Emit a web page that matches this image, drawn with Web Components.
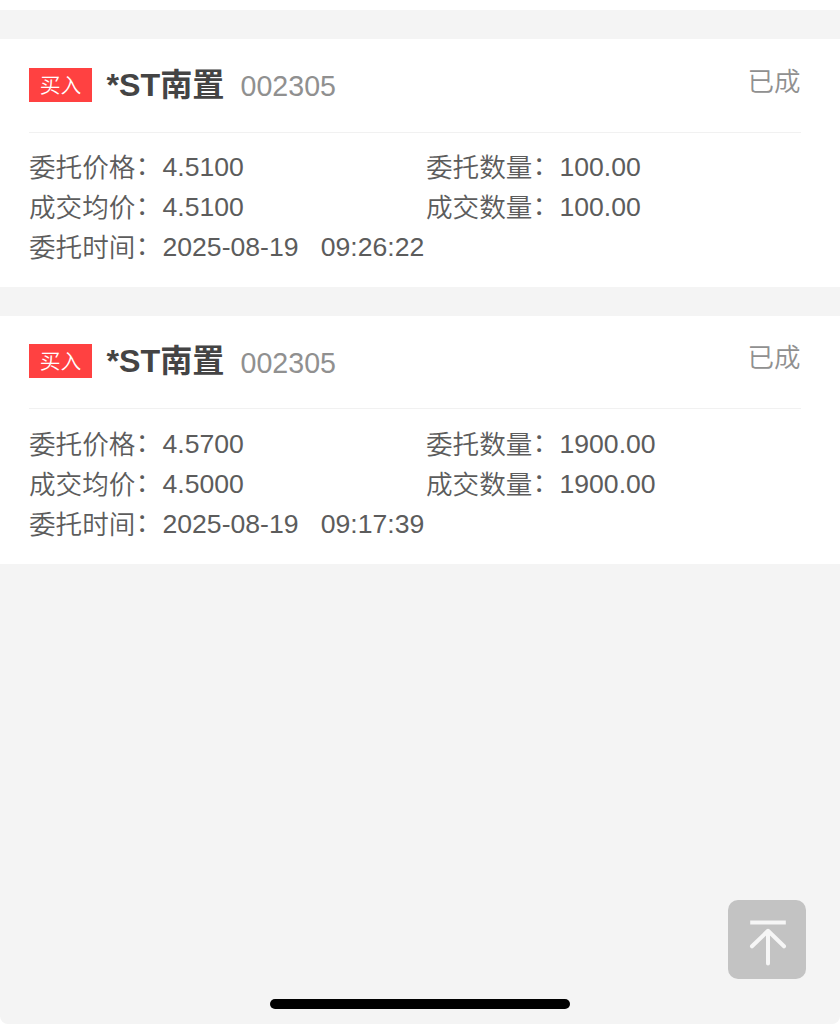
<!DOCTYPE html>
<html lang="zh-CN">
<head>
<meta charset="utf-8">
<title>委托记录</title>
<style>
  html, body {
    margin: 0;
    height: 100%;
    background: #fff;
  }
</style>
</head>
<body>
<order-page>
  <order-card side="买入" name="*ST南置" code="002305" status="已成">
    <order-field label="委托价格：">4.5100</order-field>
    <order-field label="委托数量：">100.00</order-field>
    <order-field label="成交均价：">4.5100</order-field>
    <order-field label="成交数量：">100.00</order-field>
    <order-field label="委托时间：" wide>2025-08-19   09:26:22</order-field>
  </order-card>
  <order-card side="买入" name="*ST南置" code="002305" status="已成">
    <order-field label="委托价格：">4.5700</order-field>
    <order-field label="委托数量：">1900.00</order-field>
    <order-field label="成交均价：">4.5000</order-field>
    <order-field label="成交数量：">1900.00</order-field>
    <order-field label="委托时间：" wide>2025-08-19   09:17:39</order-field>
  </order-card>
  <back-to-top slot="overlay"></back-to-top>
  <home-indicator slot="overlay"></home-indicator>
</order-page>
<script>
function attach(host, html) {
  const element = document.createElement("template");
  element.innerHTML = html;
  const shadow = host.attachShadow({ mode: "open" });
  shadow.append(element.content.cloneNode(true));
  return shadow;
}

customElements.define(
  "order-page",
  class extends HTMLElement {
    constructor() {
      super();
      attach(this, /*html*/ `
        <style>
          :host {
            display: block;
            position: relative;
            box-sizing: border-box;
            height: 1024px;
            padding-top: 10px;
            overflow: hidden;
            font-family: "Liberation Sans", "Noto Sans CJK SC", sans-serif;
          }
          main {
            box-sizing: border-box;
            height: 100%;
            padding-top: 29px;
            display: flex;
            flex-direction: column;
            gap: 28.5px;
            background: #f4f4f4;
            border-radius: 0 0 8px 8px;
          }
        </style>
        <main><slot></slot></main>
        <slot name="overlay"></slot>
      `);
    }
  }
);

customElements.define(
  "order-card",
  class extends HTMLElement {
    constructor() {
      super();
      const shadow = attach(this, /*html*/ `
        <style>
          :host {
            display: block;
            box-sizing: border-box;
            height: 248px;
            flex: none;
            padding: 0 39px 0 29px;
            background: #fff;
          }
          header {
            box-sizing: border-box;
            height: 93.7px;
            padding-bottom: 1.7px;
            display: flex;
            align-items: center;
            border-bottom: 1px solid #f1f1f1;
          }
          .side {
            width: 63px;
            height: 34px;
            line-height: 35px;
            text-align: center;
            font-size: 20.8px;
            font-weight: 350;
            color: #fff;
            background: #ff4141;
          }
          .name {
            margin-left: 14.5px;
            font-size: 32.2px;
            line-height: 40px;
            font-weight: 700;
            color: #444;
          }
          .code {
            margin-left: 16px;
            padding-top: 3px;
            font-size: 28.6px;
            line-height: 34px;
            color: #909090;
          }
          .status {
            margin-left: auto;
            margin-right: 0.4px;
            padding-bottom: 6px;
            font-size: 26.5px;
            line-height: 34px;
            font-weight: 350;
            color: #909090;
          }
          .fields {
            display: grid;
            grid-template-columns: 397px 1fr;
            grid-auto-rows: 40px;
            padding-top: 14.6px;
          }
        </style>
        <header>
          <span class="side"></span>
          <span class="name"></span>
          <span class="code"></span>
          <span class="status"></span>
        </header>
        <div class="fields"><slot></slot></div>
      `);
      for (const key of ["side", "name", "code", "status"]) {
        shadow.querySelector("." + key).textContent = this.getAttribute(key);
      }
    }
  }
);

customElements.define(
  "order-field",
  class extends HTMLElement {
    constructor() {
      super();
      const shadow = attach(this, /*html*/ `
        <style>
          :host {
            display: flex;
            font-size: 26.6px;
            line-height: 40px;
            color: #5c5c5c;
            white-space: pre;
          }
          :host([wide]) {
            grid-column: 1 / -1;
          }
          .label {
            width: 133.5px;
            padding-top: 1px;
            font-weight: 350;
          }
          /* the full-width colon sits low, lift it to the middle of the line */
          .colon {
            line-height: 1;
            font-weight: 350;
            vertical-align: 2px;
          }
        </style>
        <span class="label"><span class="text"></span><span class="colon">：</span></span>
        <span class="value"><slot></slot></span>
      `);
      shadow.querySelector(".text").textContent = this.getAttribute("label").replace("：", "");
    }
  }
);

customElements.define(
  "back-to-top",
  class extends HTMLElement {
    constructor() {
      super();
      attach(this, /*html*/ `
        <style>
          :host {
            position: absolute;
            right: 34px;
            bottom: 45px;
            width: 78.5px;
            height: 79px;
            border-radius: 10px;
            background: #c3c3c3;
          }
          svg {
            display: block;
          }
        </style>
        <svg width="78" height="79" viewBox="0 0 78 79" fill="none" stroke="#f6f6f6" stroke-width="4">
          <path d="M22.2 22.5H57.8" />
          <path d="M40 63.5V31M24 46.3L40 30.8L56 46.3" stroke-linecap="round" stroke-linejoin="round" />
        </svg>
      `);
    }
  }
);

customElements.define(
  "home-indicator",
  class extends HTMLElement {
    constructor() {
      super();
      attach(this, /*html*/ `
        <style>
          :host {
            position: absolute;
            left: 270px;
            bottom: 15.5px;
            width: 300px;
            height: 9.5px;
            border-radius: 5px;
            background: #000;
          }
        </style>
      `);
    }
  }
);
</script>
</body>
</html>
